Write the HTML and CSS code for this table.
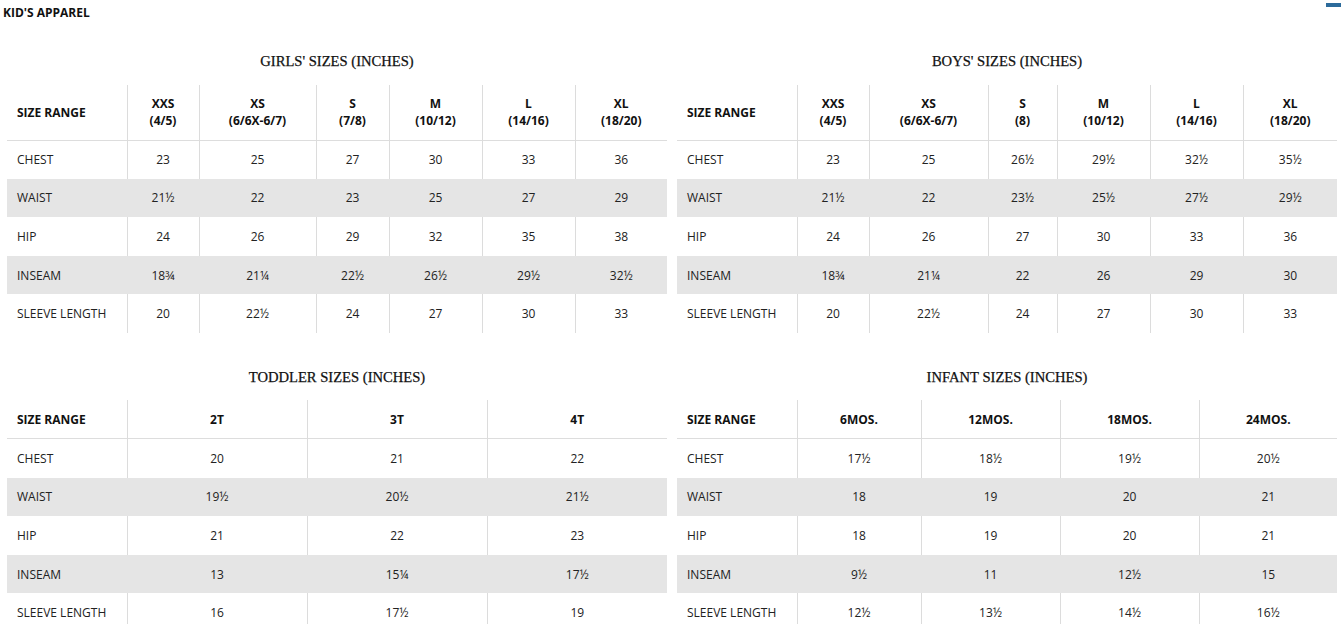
FILE: index.html
```html
<!DOCTYPE html>
<html lang="en">
<head>
<meta charset="utf-8">
<title>Kid's Apparel Size Chart</title>
<link rel="stylesheet" href="styles.css">
</head>
<body>
<div class="scroll-mark"></div>
<h1 class="page-title">KID'S APPAREL</h1>

<div class="grid grid-top">
  <section class="chart">
    <h2 class="chart-title">GIRLS' SIZES (INCHES)</h2>
    <table class="size-table">
      <colgroup><col style="width:120px"><col style="width:72px"><col style="width:117px"><col style="width:73px"><col style="width:93px"><col style="width:93px"><col style="width:92px"></colgroup>
      <thead><tr class="head-tall"><th>SIZE RANGE</th><th>XXS<br>(4/5)</th><th>XS<br>(6/6X-6/7)</th><th>S<br>(7/8)</th><th>M<br>(10/12)</th><th>L<br>(14/16)</th><th>XL<br>(18/20)</th></tr></thead>
      <tbody>
        <tr><td>CHEST</td><td>23</td><td>25</td><td>27</td><td>30</td><td>33</td><td>36</td></tr>
        <tr class="shade"><td>WAIST</td><td>21½</td><td>22</td><td>23</td><td>25</td><td>27</td><td>29</td></tr>
        <tr><td>HIP</td><td>24</td><td>26</td><td>29</td><td>32</td><td>35</td><td>38</td></tr>
        <tr class="shade"><td>INSEAM</td><td>18¾</td><td>21¼</td><td>22½</td><td>26½</td><td>29½</td><td>32½</td></tr>
        <tr><td>SLEEVE LENGTH</td><td>20</td><td>22½</td><td>24</td><td>27</td><td>30</td><td>33</td></tr>
      </tbody>
    </table>
  </section>

  <section class="chart">
    <h2 class="chart-title">BOYS' SIZES (INCHES)</h2>
    <table class="size-table">
      <colgroup><col style="width:120px"><col style="width:72px"><col style="width:119px"><col style="width:69px"><col style="width:93px"><col style="width:93px"><col style="width:94px"></colgroup>
      <thead><tr class="head-tall"><th>SIZE RANGE</th><th>XXS<br>(4/5)</th><th>XS<br>(6/6X-6/7)</th><th>S<br>(8)</th><th>M<br>(10/12)</th><th>L<br>(14/16)</th><th>XL<br>(18/20)</th></tr></thead>
      <tbody>
        <tr><td>CHEST</td><td>23</td><td>25</td><td>26½</td><td>29½</td><td>32½</td><td>35½</td></tr>
        <tr class="shade"><td>WAIST</td><td>21½</td><td>22</td><td>23½</td><td>25½</td><td>27½</td><td>29½</td></tr>
        <tr><td>HIP</td><td>24</td><td>26</td><td>27</td><td>30</td><td>33</td><td>36</td></tr>
        <tr class="shade"><td>INSEAM</td><td>18¾</td><td>21¼</td><td>22</td><td>26</td><td>29</td><td>30</td></tr>
        <tr><td>SLEEVE LENGTH</td><td>20</td><td>22½</td><td>24</td><td>27</td><td>30</td><td>33</td></tr>
      </tbody>
    </table>
  </section>
</div>

<div class="grid grid-bottom">
  <section class="chart">
    <h2 class="chart-title">TODDLER SIZES (INCHES)</h2>
    <table class="size-table">
      <colgroup><col style="width:120px"><col style="width:180px"><col style="width:180px"><col style="width:180px"></colgroup>
      <thead><tr class="head-short"><th>SIZE RANGE</th><th>2T</th><th>3T</th><th>4T</th></tr></thead>
      <tbody>
        <tr><td>CHEST</td><td>20</td><td>21</td><td>22</td></tr>
        <tr class="shade"><td>WAIST</td><td>19½</td><td>20½</td><td>21½</td></tr>
        <tr><td>HIP</td><td>21</td><td>22</td><td>23</td></tr>
        <tr class="shade"><td>INSEAM</td><td>13</td><td>15¼</td><td>17½</td></tr>
        <tr><td>SLEEVE LENGTH</td><td>16</td><td>17½</td><td>19</td></tr>
      </tbody>
    </table>
  </section>

  <section class="chart">
    <h2 class="chart-title">INFANT SIZES (INCHES)</h2>
    <table class="size-table">
      <colgroup><col style="width:120px"><col style="width:124px"><col style="width:139px"><col style="width:139px"><col style="width:138px"></colgroup>
      <thead><tr class="head-short"><th>SIZE RANGE</th><th>6MOS.</th><th>12MOS.</th><th>18MOS.</th><th>24MOS.</th></tr></thead>
      <tbody>
        <tr><td>CHEST</td><td>17½</td><td>18½</td><td>19½</td><td>20½</td></tr>
        <tr class="shade"><td>WAIST</td><td>18</td><td>19</td><td>20</td><td>21</td></tr>
        <tr><td>HIP</td><td>18</td><td>19</td><td>20</td><td>21</td></tr>
        <tr class="shade"><td>INSEAM</td><td>9½</td><td>11</td><td>12½</td><td>15</td></tr>
        <tr><td>SLEEVE LENGTH</td><td>12½</td><td>13½</td><td>14½</td><td>16½</td></tr>
      </tbody>
    </table>
  </section>
</div>
</body>
</html>
```

FILE: styles.css
```css
html, body {
  margin: 0;
  padding: 0;
  background: #ffffff;
}

body {
  font-family: "Open Sans", "Noto Sans", "Liberation Sans", sans-serif;
  font-size: 12px;
  color: #222222;
  overflow: hidden;
}

.scroll-mark {
  position: absolute;
  top: 3px;
  right: 0;
  width: 15px;
  height: 4px;
  background: #2c6b9b;
}

.page-title {
  margin: 0;
  padding: 5px 3px 0;
  font-size: 12px;
  line-height: 16px;
  font-weight: 700;
  color: #111111;
}

.grid {
  display: grid;
  grid-template-columns: 660px 660px;
  column-gap: 10px;
  margin-left: 7px;
}

.grid-top {
  margin-top: 30px;
}

.grid-top .chart-title {
  margin-bottom: 14px;
}

.grid-bottom {
  margin-top: 34px;
}

.grid-bottom .chart-title {
  margin-bottom: 13px;
}

.chart-title {
  margin: 0;
  text-align: center;
  font-family: "Liberation Serif", "DejaVu Serif", serif;
  font-weight: 400;
  font-size: 14.6px;
  line-height: 20px;
  color: #111111;
  -webkit-text-stroke: 0.25px #111111;
}

.size-table {
  width: 660px;
  table-layout: fixed;
  border-collapse: collapse;
  border-spacing: 0;
}

.size-table th,
.size-table td {
  padding: 0;
  text-align: center;
  vertical-align: middle;
  line-height: 17px;
  border-left: 1px solid #dcdcdc;
  white-space: nowrap;
}

.size-table th:first-child,
.size-table td:first-child {
  text-align: left;
  padding-left: 10px;
  border-left: none;
}

.size-table th {
  font-weight: 700;
  color: #111111;
}

.size-table thead tr {
  border-bottom: 1px solid #dddddd;
}

.head-tall {
  height: 55px;
}

.head-short {
  height: 39px;
}

.size-table tbody tr {
  height: 38.6px;
}

.size-table tr.shade td {
  background: #e5e5e5;
  border-left-color: #e5e5e5;
}
```
